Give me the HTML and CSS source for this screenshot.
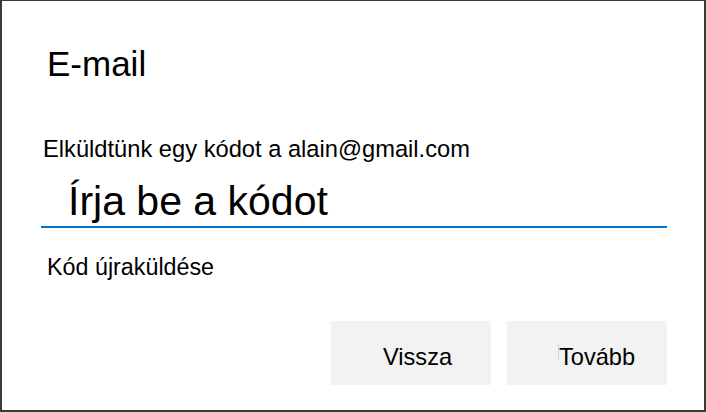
FILE: index.html
```html
<!DOCTYPE html>
<html lang="hu">

<head>
  <meta charset="UTF-8">
  <meta name="viewport" content="width=device-width, initial-scale=1.0">
  <title>E-mail</title>
  <link rel="stylesheet" href="styles.css">
</head>

<body>
  <div class="dialog">
    <h1 class="title">E-mail</h1>
    <form id="codeForm">
      <label class="hint" for="code">Elküldtünk egy kódot a alain@gmail.com</label>
      <input type="text" id="code" name="code" class="code-input" placeholder="Írja be a kódot">
      <a href="#" class="resend">Kód újraküldése</a>

      <div class="actions">
        <button type="button" class="btn">Vissza</button>
        <button type="submit" class="btn"><span class="caret"></span>Tovább</button>
      </div>
    </form>
  </div>
</body>

</html>
```

FILE: styles.css
```css
html,
body {
  margin: 0;
  padding: 0;
}

body {
  font-family: "Liberation Sans", Arial, sans-serif;
  color: #000;
  background-color: #fff;
}

.dialog {
  width: 706px;
  height: 412px;
  box-sizing: border-box;
  border: 2px solid #3a3a3a;
  border-top-width: 1px;
  padding: 43px 37px 0 39px;
}

.title {
  margin: 0 0 0 6px;
  font-size: 35px;
  line-height: 40px;
  font-weight: normal;
}

.hint {
  display: block;
  margin: 51px 0 0 2px;
  font-size: 23.7px;
  line-height: 28px;
}

.code-input {
  display: block;
  width: calc(100% - 27px);
  height: 49px;
  margin: 14px 0 0;
  padding: 0 0 0 27px;
  box-sizing: content-box;
  border: none;
  border-bottom: 2px solid #0072cf;
  outline: none;
  font-family: inherit;
  font-size: 41px;
  color: #000;
  background: transparent;
}

.code-input::placeholder {
  color: #000;
  opacity: 1;
}

.resend {
  display: inline-block;
  margin: 25px 0 0 6px;
  font-size: 23.3px;
  line-height: 28px;
  color: #000;
  text-decoration: none;
}

.actions {
  display: flex;
  justify-content: flex-end;
  column-gap: 16px;
  margin-top: 40px;
}

.btn {
  position: relative;
  width: 160px;
  height: 64px;
  box-sizing: border-box;
  padding: 8px 0 0 52px;
  border: none;
  background-color: #f2f2f2;
  font-family: inherit;
  font-size: 23.6px;
  line-height: 28px;
  color: #000;
  text-align: left;
  vertical-align: top;
  cursor: pointer;
}

.btn:hover {
  background-color: #e6e6e6;
}

.caret {
  position: absolute;
  left: 51px;
  top: 23px;
  height: 16px;
  border-left: 1px solid #d4d4d4;
}
```
